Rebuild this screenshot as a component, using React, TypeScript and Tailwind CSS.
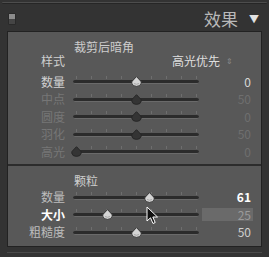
const font = { fontFamily: '"Noto Sans CJK SC", "Noto Sans", sans-serif' };

type Row = {
  label: string;
  value: string;
  pct: number;
  labelCls: string;
  valueCls: string;
  active: boolean;
  boxed?: boolean;
};

function Thumb({ active }: { active: boolean }) {
  return (
    <svg width="11" height="11" viewBox="0 0 11 11" className="block">
      <path
        d="M5.5 0.6 L9.8 5.2 Q10.4 6 10.2 7.2 Q9.6 10.4 5.5 10.4 Q1.4 10.4 0.8 7.2 Q0.6 6 1.2 5.2 Z"
        fill={active ? "#d4d4d4" : "#343434"}
        stroke={active ? "#2a2a2a" : "#262626"}
        strokeWidth="0.9"
      />
      {active && <path d="M3 7.5 Q5.5 9 8 7.5" stroke="#9a9a9a" strokeWidth="0.8" fill="none" />}
    </svg>
  );
}

function Slider({ row }: { row: Row }) {
  const ticks = [0, 1, 2, 3, 4, 5, 6, 7, 8];
  return (
    <div className="flex items-center h-[17.5px]">
      <div className={`w-[57px] text-right text-[12px] leading-none ${row.labelCls}`}>{row.label}</div>
      <div className="relative w-[126px] h-full ml-[8px]">
        {ticks.map((t) => (
          <div
            key={t}
            className="absolute top-[3px] w-px h-[3px] bg-[#6e6e6e]"
            style={{ left: `${3 + t * 15}px` }}
          />
        ))}
        <div className="absolute left-0 right-0 top-[7px] h-[4px] rounded-full bg-[#2b2b2b] border-b border-[#6a6a6a]" />
        <div className="absolute top-[3px]" style={{ left: `${row.pct * 120 - 2}px` }}>
          <Thumb active={row.active} />
        </div>
      </div>
      <div className="flex-1 flex justify-end pr-[10px]">
        <div
          className={`h-[13px] flex items-center justify-end text-[12px] leading-none ${row.valueCls} ${
            row.boxed ? "w-[51px] bg-[#6a6a6a] pr-[2px] -mr-[2px]" : ""
          }`}
        >
          {row.value}
        </div>
      </div>
    </div>
  );
}

const vignette: Row[] = [
  { label: "数量", value: "0", pct: 0.5, labelCls: "text-[#d2d2d2]", valueCls: "text-[#d8d8d8]", active: true },
  { label: "中点", value: "50", pct: 0.5, labelCls: "text-[#767676]", valueCls: "text-[#6f6f6f]", active: false },
  { label: "圆度", value: "0", pct: 0.5, labelCls: "text-[#767676]", valueCls: "text-[#6f6f6f]", active: false },
  { label: "羽化", value: "50", pct: 0.5, labelCls: "text-[#767676]", valueCls: "text-[#6f6f6f]", active: false },
  { label: "高光", value: "0", pct: 0, labelCls: "text-[#767676]", valueCls: "text-[#6f6f6f]", active: false },
];

const grain: Row[] = [
  { label: "数量", value: "61", pct: 0.61, labelCls: "text-[#bdbdbd]", valueCls: "text-white font-bold", active: true },
  { label: "大小", value: "25", pct: 0.26, labelCls: "text-white font-bold", valueCls: "text-[#9a9a9a]", active: true, boxed: true },
  { label: "粗糙度", value: "50", pct: 0.5, labelCls: "text-[#bdbdbd]", valueCls: "text-[#cfcfcf]", active: true },
];

export default function App() {
  return (
    <div className="relative w-[269px] h-[257px] bg-[#333333] overflow-hidden flex flex-col" style={font}>
      {/* top rule */}
      <div className="h-[6px] pt-[2px] px-[2px]">
        <div className="h-[2px] rounded-full bg-[#4d4d4d] border-b border-[#262626]" />
      </div>

      {/* header */}
      <div className="h-[25px] flex items-center pl-[8px] pr-[10px]">
        <div className="w-[8px] h-[12px] rounded-[1px] overflow-hidden flex flex-col border border-[#2a2a2a]">
          <div className="flex-1 bg-[#8c8c8c]" />
          <div className="flex-1 bg-[#454545]" />
        </div>
        <div className="flex-1" />
        <span className="text-[17px] leading-none text-[#b9b9b9]">效果</span>
        <span className="ml-[11px] text-[10px] leading-none text-[#e2e2e2]">▼</span>
      </div>

      {/* panel body */}
      <div className="mx-[7px] w-[255px] bg-[#585858] border border-[#222222]">
        <div className="pt-[8px] pb-[3px]">
          <div className="h-[14px] flex items-center pl-[66px] text-[12px] leading-none text-[#cdcdcd]">裁剪后暗角</div>
          <div className="h-[14px] flex items-center text-[12px] leading-none">
            <div className="w-[57px] text-right text-[#cfcfcf]">样式</div>
            <div className="ml-[107px] text-[#dedede]">高光优先</div>
            <div className="ml-[6px] text-[8px] text-[#8a8a8a]">⇕</div>
          </div>
          <div className="h-[5px]" />
          {vignette.map((r) => (
            <Slider key={r.label} row={r} />
          ))}
        </div>
        <div className="h-[2px] bg-[#2c2c2c]" />
        <div className="pt-[8px] pb-[5px]">
          <div className="h-[14px] flex items-center pl-[66px] text-[12px] leading-none text-[#cdcdcd]">颗粒</div>
          <div className="h-[1px]" />
          {grain.map((r) => (
            <Slider key={r.label} row={r} />
          ))}
        </div>
      </div>

      {/* bottom rule */}
      <div className="mt-[5px] mx-[7px] h-[1px] bg-[#4a4a4a]" />

      {/* cursor */}
      <svg className="absolute left-[146px] top-[206px]" width="13" height="19" viewBox="0 0 13 19">
        <path d="M1 1 L1 15 L4.5 11.8 L7 17.5 L9.2 16.5 L6.8 11 L11.5 11 Z" fill="#111" stroke="#fff" strokeWidth="1" />
      </svg>
    </div>
  );
}
